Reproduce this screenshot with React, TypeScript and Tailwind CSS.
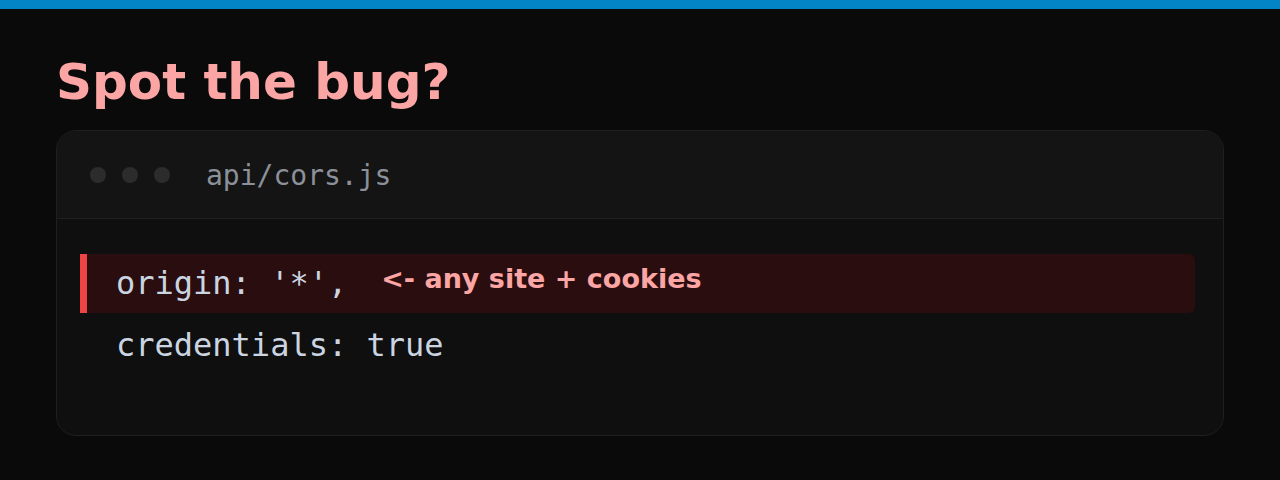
export default function App() {
  return (
    <div className="h-[480px] w-[1280px] overflow-hidden bg-[#0a0a0a]">
      <div className="h-[9px] bg-[#0284c7]" />
      <div className="px-14 pt-[41px]">
        <h1 className="font-['DejaVu_Sans',sans-serif] text-[50px] font-bold leading-[64px] text-[#fca5a5]">
          Spot the bug?
        </h1>
        <div className="mt-[16px] overflow-hidden rounded-[20px] border border-[#1f1f1f] bg-[#0f0f0f]">
          <div className="flex h-[88px] items-center gap-4 border-b border-[#1f1f1f] bg-[#141414] px-[33px]">
            <div className="flex gap-4">
              <span className="size-4 rounded-full bg-[#2c2c2c]" />
              <span className="size-4 rounded-full bg-[#2c2c2c]" />
              <span className="size-4 rounded-full bg-[#2c2c2c]" />
            </div>
            <span className="ml-5 pt-[2px] font-['DejaVu_Sans_Mono',monospace] text-[28px] text-[#8b9099]">
              api/cors.js
            </span>
          </div>
          <div className="pb-[58px] pl-[23px] pr-[28px] pt-[35px] font-['DejaVu_Sans_Mono',monospace] text-[32px] text-[#cbd5e1]">
            <div className="flex h-[59px] items-center gap-[34px] rounded-r-md border-l-[7px] border-[#ef4444] bg-[#2a0d0f] pb-[2px] pl-[29px]">
              <span>origin: '*',</span>
              <span className="mb-[6px] font-['DejaVu_Sans',sans-serif] text-[27px] font-bold text-[#fca5a5]">
                &lt;- any site + cookies
              </span>
            </div>
            <div className="flex h-[64px] items-center pl-[36px]">credentials: true</div>
          </div>
        </div>
      </div>
    </div>
  );
}
